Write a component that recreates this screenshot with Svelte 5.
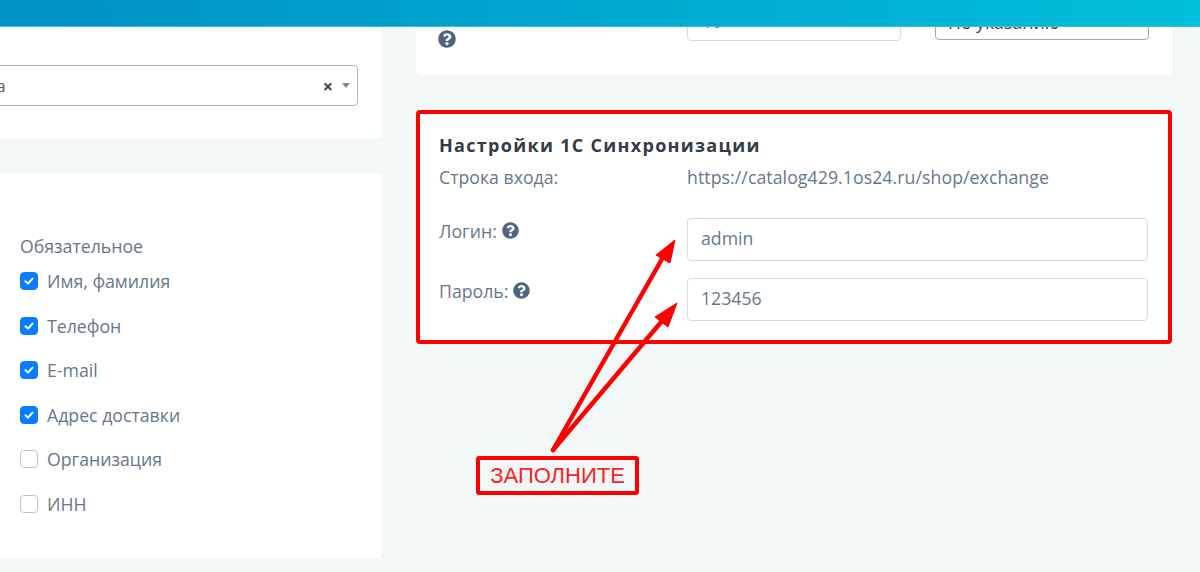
<script>
  const fields = [
    { label: 'Имя, фамилия', on: true },
    { label: 'Телефон', on: true },
    { label: 'E-mail', on: true },
    { label: 'Адрес доставки', on: true },
    { label: 'Организация', on: false },
    { label: 'ИНН', on: false }
  ];
</script>

{#snippet help(cls)}
  <svg class={cls} viewBox="0 0 512 512" width="17" height="17" aria-hidden="true">
    <path fill="#4d6580" d="M504 256c0 137-111 248-248 248S8 393 8 256 119 8 256 8s248 111 248 248zM262.700 90c-54.500 0-89.300 23-116.600 63.800-3.500 5.300-2.400 12.400 2.700 16.300l34.700 26.300c5.200 3.900 12.600 3 16.700-2.100 17.900-22.700 30.100-35.800 57.300-35.800 20.400 0 45.700 13.100 45.700 33 0 15-12.400 22.700-32.600 34-23.600 13.200-54.800 29.700-54.800 70.900V300c0 6.600 5.400 12 12 12h56c6.600 0 12-5.400 12-12v-1.300c0-28.600 83.500-29.800 83.500-107.100C378.300 133.400 318 90 262.700 90zM256 339c-25.400 0-46 20.600-46 46s20.600 46 46 46 46-20.600 46-46-20.600-46-46-46z"/>
  </svg>
{/snippet}

<div class="page">
  <header class="topbar"></header>

  <main class="columns">
    <div class="col left">
      <section class="card select-card">
        <div class="select">
          <span class="select-value">Москва</span>
          <span class="clear">×</span>
          <span class="caret"></span>
        </div>
      </section>

      <section class="card fields-card">
        <div class="fields-title">Обязательное</div>
        <ul class="fields">
          {#each fields as f}
            <li>
              <span class="box" class:on={f.on}>
                {#if f.on}
                  <svg viewBox="0 0 12 12" width="12" height="12" aria-hidden="true">
                    <path d="M2.500 6.300 5 8.600 9.500 3.600" fill="none" stroke="#fff" stroke-width="2" stroke-linecap="round" stroke-linejoin="round"/>
                  </svg>
                {/if}
              </span>
              <span>{f.label}</span>
            </li>
          {/each}
        </ul>
      </section>
    </div>

    <div class="col right">
      <section class="card top-card">
        <div class="help-cell">{@render help('help-top')}</div>
        <div class="fake-input"><span>10</span></div>
        <div class="fake-select"><span>По указанию</span></div>
      </section>

      <section class="card sync-card">
        <h3>Настройки 1С Синхронизации</h3>
        <div class="row url-row">
          <span class="lbl">Строка входа:</span>
          <span class="val">https://catalog429.1os24.ru/shop/exchange</span>
        </div>
        <div class="row form-row">
          <span class="lbl">Логин: {@render help('help-inline')}</span>
          <input value="admin" />
        </div>
        <div class="row form-row">
          <span class="lbl">Пароль: {@render help('help-inline')}</span>
          <input value="123456" />
        </div>
      </section>
    </div>
  </main>

  <svg class="arrows" viewBox="0 0 1200 572" width="1200" height="572" aria-hidden="true">
    <g stroke="#ff0000" stroke-width="4.500" fill="none" stroke-linecap="round">
      <path d="M553 450 662 259" />
      <path d="M553 450 662 321" />
    </g>
    <path d="M675 240 656 255 670 263z" fill="#ff0000" stroke="#ff0000" stroke-linejoin="round"/>
    <path d="M677 303 655 317 668 327z" fill="#ff0000" stroke="#ff0000" stroke-linejoin="round"/>
  </svg>
  <div class="callout">ЗАПОЛНИТЕ</div>
</div>

<style>
  :global(body) {
    margin: 0;
    background: #f2f7f8;
  }
  .page {
    position: relative;
    width: 1200px;
    height: 572px;
    overflow: hidden;
    background: #f2f7f8;
    font-family: "Open Sans", "Liberation Sans", sans-serif;
    font-size: 17.700px;
    color: #66778a;
  }
  .topbar {
    position: absolute;
    z-index: 5;
    top: 0;
    left: 0;
    right: 0;
    height: 27px;
    background: linear-gradient(90deg, #0091c6 0%, #00bfda 100%);
    border-bottom: 1px solid #3cc0de;
    box-sizing: border-box;
  }
  .columns {
    display: flex;
    gap: 34px;
    margin-left: -90px;
    align-items: flex-start;
  }
  .col {
    display: flex;
    flex-direction: column;
  }
  .left {
    width: 472px;
    gap: 34px;
  }
  .right {
    width: 756px;
    gap: 35px;
  }
  .card {
    background: #fff;
    border-radius: 5px;
    box-sizing: border-box;
  }
  .select-card {
    height: 139px;
    padding: 65px 24px 0 20px;
  }
  .select {
    height: 41px;
    box-sizing: border-box;
    border: 1px solid #b4b4b4;
    border-radius: 4px;
    display: flex;
    align-items: center;
    padding: 0 7px 0 13px;
    color: #55606c;
    font-size: 17px;
  }
  .select-value {
    flex: 1;
  }
  .clear {
    font-weight: 700;
    font-size: 18px;
    color: #444;
    margin-right: 9px;
    line-height: 1;
  }
  .caret {
    width: 0;
    height: 0;
    border-left: 4.500px solid transparent;
    border-right: 4.500px solid transparent;
    border-top: 5px solid #888;
  }
  .fields-card {
    height: 385px;
    padding: 61px 0 0 110px;
  }
  .fields-title {
    line-height: 24px;
    margin-bottom: 11px;
  }
  .fields {
    list-style: none;
    margin: 0;
    padding: 0;
    display: flex;
    flex-direction: column;
    gap: 20.500px;
  }
  .fields li {
    display: flex;
    align-items: center;
    gap: 9px;
    height: 24px;
  }
  .box {
    width: 18px;
    height: 18px;
    box-sizing: border-box;
    border-radius: 4px;
    border: 1.500px solid #bcc6d2;
    background: #fff;
    display: flex;
    align-items: center;
    justify-content: center;
  }
  .box.on {
    background: #0a7cff;
    border-color: #0a7cff;
  }
  .top-card {
    height: 75px;
    display: grid;
    grid-template-columns: 237px 214px 214px;
    column-gap: 34px;
  }
  .help-cell {
    padding: 30px 0 0 22px;
  }
  .help-top {
    display: block;
    width: 18px;
    height: 18px;
  }
  .fake-input, .fake-select {
    height: 42px;
    margin-top: -1px;
    box-sizing: border-box;
    border-radius: 4px;
    display: flex;
    align-items: center;
    padding-left: 14px;
    color: #5d6e80;
    background: #fff;
  }
  .fake-input {
    border: 1px solid #d5dbe2;
    padding-top: 2px;
  }
  .fake-select {
    border: 1px solid #a8a8a8;
    height: 41px;
    color: #444;
    padding-left: 12px;
    padding-top: 4px;
  }
  .sync-card {
    height: 234px;
    border: 4px solid #ff0000;
    border-radius: 4px;
    padding: 18.500px 20px 0 19px;
  }
  h3 {
    margin: 0;
    font-size: 18px;
    font-weight: 700;
    letter-spacing: 1.300px;
    line-height: 24px;
    color: #333b44;
  }
  .row {
    display: grid;
    grid-template-columns: 248px 461px;
  }
  .url-row {
    margin-top: 8px;
    line-height: 24px;
    margin-bottom: 29px;
  }
  .val {
    letter-spacing: 0.070px;
  }
  .form-row {
    margin-bottom: 17px;
    height: 43px;
  }
  .lbl {
    display: flex;
    align-items: flex-start;
    gap: 5px;
    line-height: 24px;
    padding-top: 1px;
  }
  .url-row .lbl {
    padding-top: 0;
  }
  .help-inline {
    margin-top: 3px;
  }
  input {
    width: 100%;
    height: 43px;
    box-sizing: border-box;
    border: 1px solid #d5dbe2;
    border-radius: 4px;
    padding: 0 14px 2px 13px;
    font: inherit;
    color: #66778a;
    background: #fff;
    outline: none;
  }
  .arrows {
    position: absolute;
    inset: 0;
    z-index: 3;
    pointer-events: none;
  }
  .callout {
    position: absolute;
    z-index: 4;
    left: 476px;
    top: 456px;
    width: 163px;
    height: 39px;
    box-sizing: border-box;
    border: 4px solid #ff0000;
    border-radius: 3px;
    background: #f2f7f8;
    color: #ff2020;
    font-family: "Liberation Sans", Arial, sans-serif;
    font-size: 22px;
    display: flex;
    align-items: center;
    justify-content: center;
  }
</style>
